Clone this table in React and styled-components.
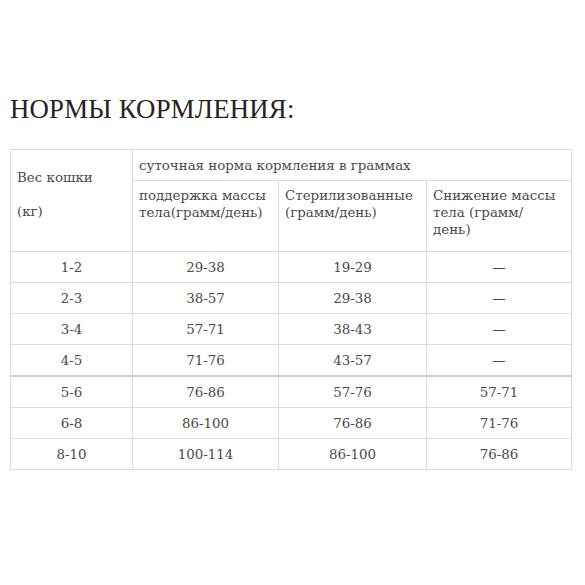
import styled, { createGlobalStyle } from "styled-components";

const GlobalStyle = createGlobalStyle`
  html, body {
    margin: 0;
    padding: 0;
    background: #fff;
  }
`;

const rows = [
  ["1-2", "29-38", "19-29", "—"],
  ["2-3", "38-57", "29-38", "—"],
  ["3-4", "57-71", "38-43", "—"],
  ["4-5", "71-76", "43-57", "—"],
  ["5-6", "76-86", "57-76", "57-71"],
  ["6-8", "86-100", "76-86", "71-76"],
  ["8-10", "100-114", "86-100", "76-86"],
];

const Page = styled.div`
  padding: 93px 14px 0 10px;
  font-family: "DejaVu Serif", "Liberation Serif", serif;
`;

const Title = styled.h1`
  margin: 0 0 24px 0;
  font-family: "Liberation Serif", serif;
  font-weight: normal;
  font-size: 26.8px;
  line-height: 32px;
  color: #2b2020;
  letter-spacing: 0.2px;
`;

const Table = styled.table`
  width: 561px;
  border-collapse: collapse;
  table-layout: fixed;
  font-size: 13.4px;
  color: #4a4a4a;
  border: 1px solid #dcdcdc;
`;

const Cell = styled.td`
  border: 1px solid #dcdcdc;
  padding: ${(p) => p.$pad || "0 6px"};
  text-align: ${(p) => (p.$center ? "center" : "left")};
  vertical-align: ${(p) => p.$valign || "middle"};
  line-height: 17px;
  height: ${(p) => p.$h || "auto"};
`;

const Row = styled.tr`
  border-top: ${(p) => (p.$split ? "2px solid #cfcfcf" : "1px solid #dcdcdc")};
`;

const Line = styled.div`
  margin-bottom: ${(p) => p.$gap || 0}px;
`;

export default function App() {
  return (
    <Page>
      <GlobalStyle />
      <Title>НОРМЫ КОРМЛЕНИЯ:</Title>
      <Table>
        <colgroup>
          <col style={{ width: 122 }} />
          <col style={{ width: 146 }} />
          <col style={{ width: 148 }} />
          <col style={{ width: 145 }} />
        </colgroup>
        <tbody>
          <tr>
            <Cell rowSpan={2} $valign="top" $pad="19px 6px 0 6px">
              <Line $gap={17}>Вес кошки</Line>
              <Line>(кг)</Line>
            </Cell>
            <Cell colSpan={3} $h="30px">
              суточная норма кормления в граммах
            </Cell>
          </tr>
          <tr>
            <Cell $valign="top" $pad="6px 6px 0 6px" $h="64px">
              поддержка массы тела(грамм/день)
            </Cell>
            <Cell $valign="top" $pad="6px 6px 0 6px">
              Стерилизованные (грамм/день)
            </Cell>
            <Cell $valign="top" $pad="6px 6px 0 6px">
              Снижение массы тела (грамм/ день)
            </Cell>
          </tr>
          {rows.map((r, i) => (
            <Row key={r[0]} $split={i === 4}>
              {r.map((v, j) => (
                <Cell key={j} $center $h="30px">
                  {v}
                </Cell>
              ))}
            </Row>
          ))}
        </tbody>
      </Table>
    </Page>
  );
}
